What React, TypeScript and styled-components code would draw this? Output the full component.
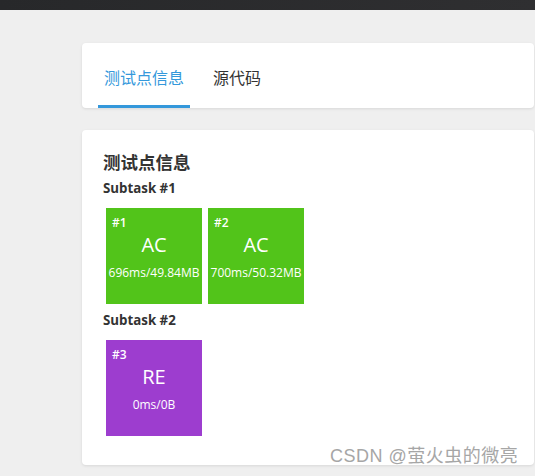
import styled, { createGlobalStyle } from "styled-components";

const GlobalStyle = createGlobalStyle`
  html, body {
    margin: 0;
    padding: 0;
    background: #efefef;
    overflow: hidden;
  }
  * {
    box-sizing: border-box;
  }
`;

type Verdict = "AC" | "RE";

interface Testcase {
  id: number;
  verdict: Verdict;
  stats: string;
}

interface Subtask {
  name: string;
  cases: Testcase[];
}

const subtasks: Subtask[] = [
  {
    name: "Subtask #1",
    cases: [
      { id: 1, verdict: "AC", stats: "696ms/49.84MB" },
      { id: 2, verdict: "AC", stats: "700ms/50.32MB" },
    ],
  },
  {
    name: "Subtask #2",
    cases: [{ id: 3, verdict: "RE", stats: "0ms/0B" }],
  },
];

const verdictColors: Record<Verdict, string> = {
  AC: "#52c41a",
  RE: "#9d3dcf",
};

export default function App() {
  return (
    <Style.Page>
      <GlobalStyle />
      <Style.TopBar />
      <Style.Main>
        <Style.TabCard>
          <Style.Tab $active>测试点信息</Style.Tab>
          <Style.Tab>源代码</Style.Tab>
        </Style.TabCard>

        <Style.Card>
          <Style.Heading>测试点信息</Style.Heading>
          {subtasks.map((sub) => (
            <Style.SubtaskBlock key={sub.name}>
              <Style.SubtaskTitle>{sub.name}</Style.SubtaskTitle>
              <Style.CaseRow>
                {sub.cases.map((c) => (
                  <Style.CaseBox key={c.id} $color={verdictColors[c.verdict]}>
                    <span className="id">#{c.id}</span>
                    <span className="verdict">{c.verdict}</span>
                    <span className="stats">{c.stats}</span>
                  </Style.CaseBox>
                ))}
              </Style.CaseRow>
            </Style.SubtaskBlock>
          ))}
        </Style.Card>
      </Style.Main>
      <Style.Watermark>CSDN @萤火虫的微亮</Style.Watermark>
    </Style.Page>
  );
}

const Style = {
  Page: styled.div`
    position: relative;
    width: 535px;
    height: 476px;
    overflow: hidden;
    background: #efefef;
    font-family: "Open Sans", "Noto Sans CJK SC", sans-serif;
    color: #333;
  `,

  TopBar: styled.div`
    height: 10px;
    background: linear-gradient(90deg, #27282a, #2f2f31);
  `,

  Main: styled.div`
    display: flex;
    flex-direction: column;
    gap: 22px;
    padding: 33px 1px 0 82px;
  `,

  TabCard: styled.nav`
    display: flex;
    gap: 17px;
    height: 65px;
    padding-left: 16px;
    background: #fff;
    border-radius: 4px;
    box-shadow: 0 1px 3px rgba(0, 0, 0, 0.1);
  `,

  Tab: styled.div<{ $active?: boolean }>`
    padding: 22px 6px 0;
    font-size: 16px;
    line-height: 24px;
    font-family: "Noto Sans CJK SC", sans-serif;
    color: ${(p) => (p.$active ? "#3498db" : "#333")};
    border-bottom: 3px solid ${(p) => (p.$active ? "#3498db" : "transparent")};
  `,

  Card: styled.section`
    height: 335px;
    padding: 20px 21px 26px;
    background: #fff;
    border-radius: 4px;
    box-shadow: 0 1px 3px rgba(0, 0, 0, 0.1);
  `,

  Heading: styled.h2`
    margin: 0;
    font-size: 17.5px;
    line-height: 24px;
    font-weight: 700;
    font-family: "Noto Sans CJK SC", sans-serif;
    color: #333;
  `,

  SubtaskBlock: styled.div`
    margin-top: 5px;

    & + & {
      margin-top: 4px;
    }
  `,

  SubtaskTitle: styled.h3`
    margin: 0 0 8px;
    font-size: 13.3px;
    line-height: 18px;
    font-weight: 700;
    color: #333;
  `,

  CaseRow: styled.div`
    display: flex;
    flex-wrap: wrap;
  `,

  CaseBox: styled.div<{ $color: string }>`
    display: flex;
    flex-direction: column;
    align-items: center;
    width: 96px;
    height: 96px;
    margin: 3px;
    padding-top: 7px;
    background: ${(p) => p.$color};
    color: #fff;
    white-space: nowrap;

    .id {
      align-self: flex-start;
      padding-left: 6px;
      font-size: 12px;
      line-height: 16px;
      font-weight: 600;
    }

    .verdict {
      margin-top: 1px;
      font-size: 20px;
      line-height: 26px;
    }

    .stats {
      margin-top: 7px;
      font-size: 12px;
      line-height: 16px;
    }
  `,

  Watermark: styled.div`
    position: absolute;
    left: 330px;
    top: 446px;
    font-family: "Liberation Sans", "Noto Sans CJK SC", sans-serif;
    font-size: 18px;
    line-height: 20px;
    letter-spacing: 0.5px;
    color: #a6a6a6;
    text-shadow: 0 0 1px #fff, 0 0 2px #fff;
    white-space: nowrap;
  `,
};
